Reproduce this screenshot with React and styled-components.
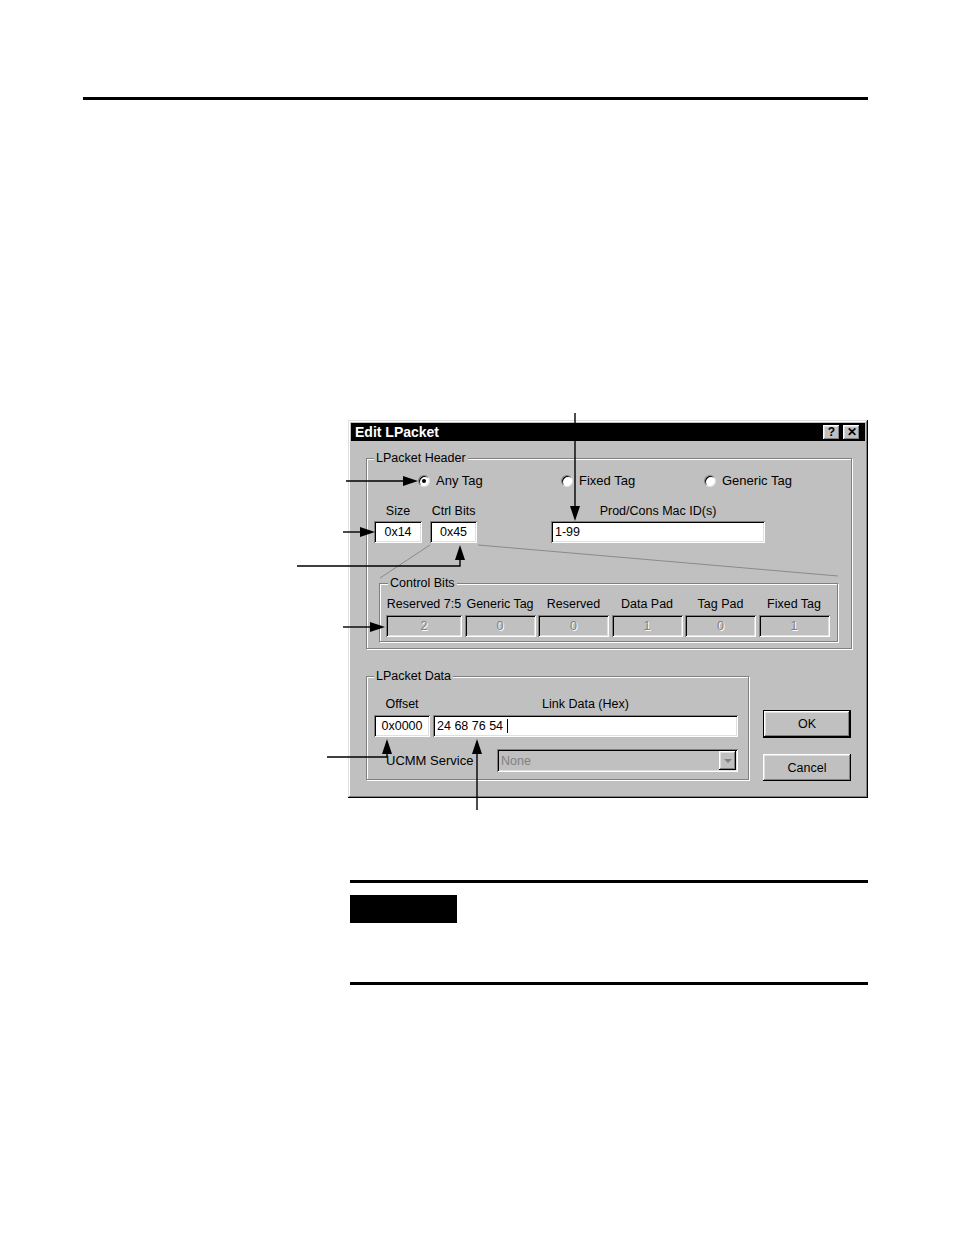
import React from 'react'
import styled, { createGlobalStyle } from 'styled-components'

const GlobalStyle = createGlobalStyle`
  html, body {
    margin: 0;
    padding: 0;
    background: #fff;
  }
  body {
    font-family: "Liberation Sans", Arial, sans-serif;
  }
`

const Page = styled.div`
  position: relative;
  width: 954px;
  height: 1235px;
  padding-top: 97px;
  box-sizing: border-box;
  background: #fff;
  overflow: hidden;
`

const Rule = styled.div`
  height: 3px;
  background: #000;
  margin-top: ${p => p.$top}px;
  margin-left: ${p => p.$left}px;
  width: ${p => p.$width}px;
`

const NoteTag = styled.div`
  margin-top: 12px;
  margin-left: 350px;
  width: 107px;
  height: 28px;
  background: #000;
`

/* ---------- dialog chrome ---------- */

const raised = `
  box-shadow: inset -1px -1px #000, inset 1px 1px #fff,
    inset -2px -2px #808080, inset 2px 2px #dfdfdf;
`

const sunken = `
  box-shadow: inset 1px 1px #808080, inset -1px -1px #fff,
    inset 2px 2px #000, inset -2px -2px #dfdfdf;
`

const Dialog = styled.div`
  margin-top: 320px;
  margin-left: 348px;
  width: 520px;
  box-sizing: border-box;
  padding: 3px;
  background: #c0c0c0;
  box-shadow: inset -1px -1px #000, inset 1px 1px #dfdfdf,
    inset -2px -2px #808080, inset 2px 2px #fff;
  font-size: 12.5px;
  color: #000;
`

const TitleBar = styled.div`
  height: 18px;
  background: #000;
  display: flex;
  align-items: center;
  justify-content: space-between;
  padding: 0 5px 0 4px;
`

const Title = styled.span`
  color: #fff;
  font-weight: bold;
  font-size: 14px;
`

const TitleButtons = styled.div`
  display: flex;
  gap: 3px;
`

const TitleButton = styled.div`
  width: 17px;
  height: 15px;
  background: #c0c0c0;
  ${raised}
  display: flex;
  align-items: center;
  justify-content: center;
  font-weight: bold;
  font-size: 12px;
  line-height: 15px;
`

const Body = styled.div`
  padding: 17px 13px 14px 15px;
  display: flex;
  flex-direction: column;
`

const GroupBox = styled.div`
  position: relative;
  border: 1px solid #808080;
  box-shadow: inset 1px 1px #fff, 1px 1px #fff;
  box-sizing: border-box;
`

const GroupTitle = styled.span`
  position: absolute;
  top: -8px;
  left: ${p => p.$left}px;
  padding: 0 2px;
  background: #c0c0c0;
  line-height: 14px;
  white-space: nowrap;
`

/* ---------- header group ---------- */

const RadioRow = styled.div`
  margin-top: 15px;
  height: 14px;
  padding-left: 51px;
  display: flex;
  align-items: center;
`

const RadioItem = styled.label`
  width: 143px;
  display: flex;
  align-items: center;
  gap: 6px;
  line-height: 14px;
  font-size: 13px;
`

const RadioDot = styled.span`
  position: relative;
  width: 12px;
  height: 12px;
  box-sizing: border-box;
  border-radius: 50%;
  background: #fff;
  border: 1px solid;
  border-color: #808080 #dfdfdf #dfdfdf #808080;
  box-shadow: inset 1px 1px #000;
  &::after {
    content: '';
    display: ${p => (p.$checked ? 'block' : 'none')};
    position: absolute;
    left: 3px;
    top: 3px;
    width: 4px;
    height: 4px;
    border-radius: 50%;
    background: #000;
  }
`

const FieldRow = styled.div`
  margin-top: 16px;
  padding-left: 7px;
  display: flex;
`

const FieldCol = styled.div`
  width: ${p => p.$w}px;
  margin-left: ${p => p.$ml || 0}px;
  display: flex;
  flex-direction: column;
  align-items: center;
`

const FieldLabel = styled.span`
  line-height: 14px;
  margin-bottom: ${p => p.$gap ?? 3}px;
  white-space: nowrap;
`

const TextBox = styled.div`
  width: 100%;
  height: 22px;
  box-sizing: border-box;
  padding: 0 4px;
  background: #fff;
  ${sunken}
  display: flex;
  align-items: center;
  justify-content: ${p => (p.$center ? 'center' : 'flex-start')};
  white-space: pre;
  line-height: 22px;
`

const Caret = styled.span`
  display: inline-block;
  width: 1px;
  height: 14px;
  background: #000;
`

const ControlBits = styled(GroupBox)`
  margin: 40px 13px 6px 12px;
  padding: 13px 8px 4px 6px;
`

const BitsGrid = styled.div`
  display: grid;
  grid-template-columns: 76px repeat(5, 71px);
  column-gap: 2.5px;
  row-gap: 4px;
`

const BitLabel = styled.span`
  text-align: center;
  line-height: 14px;
  white-space: nowrap;
`

const BitCell = styled.div`
  height: 22px;
  background: #c0c0c0;
  ${sunken}
  display: flex;
  align-items: center;
  justify-content: center;
  color: #808080;
  text-shadow: 1px 1px #fff;
`

/* ---------- data group + buttons ---------- */

const BottomRow = styled.div`
  margin-top: 27px;
  display: flex;
  align-items: flex-start;
`

const DataGroup = styled(GroupBox)`
  width: 383px;
  padding-bottom: 7px;
`

const DataRow = styled.div`
  margin-top: ${p => p.$top}px;
  padding-left: 7px;
  display: flex;
`

const ServiceRow = styled.div`
  margin-top: 12px;
  padding-left: 19px;
  display: flex;
  align-items: center;
`

const ServiceLabel = styled.span`
  width: 111px;
  line-height: 14px;
  font-size: 13px;
`

const ComboBox = styled.div`
  width: 241px;
  height: 23px;
  box-sizing: border-box;
  padding: 2px 2px 2px 4px;
  background: #c0c0c0;
  ${sunken}
  display: flex;
  align-items: center;
  justify-content: space-between;
  color: #808080;
`

const ComboButton = styled.div`
  width: 17px;
  height: 19px;
  background: #c0c0c0;
  ${raised}
  display: flex;
  align-items: center;
  justify-content: center;
  &::after {
    content: '';
    border-left: 4px solid transparent;
    border-right: 4px solid transparent;
    border-top: 4px solid #808080;
    margin-top: 1px;
  }
`

const ButtonCol = styled.div`
  margin-left: 14px;
  padding-top: 34px;
  width: 88px;
  display: flex;
  flex-direction: column;
  gap: 16px;
`

const PushButton = styled.div`
  height: ${p => (p.$default ? 28 : 27)}px;
  box-sizing: border-box;
  background: #c0c0c0;
  border: ${p => (p.$default ? '1px solid #000' : 'none')};
  ${raised}
  display: flex;
  align-items: center;
  justify-content: center;
  line-height: 14px;
`

/* ---------- callout arrows drawn over the figure ---------- */

const Overlay = styled.svg`
  position: absolute;
  left: 0;
  top: 0;
  pointer-events: none;
`

const head = (x, y, dir) => {
  const L = 15
  const W = 5
  if (dir === 'right') return `${x},${y} ${x - L},${y - W} ${x - L},${y + W}`
  if (dir === 'down') return `${x},${y} ${x - W},${y - L} ${x + W},${y - L}`
  return `${x},${y} ${x - W},${y + L} ${x + W},${y + L}`
}

const callouts = [
  { d: 'M575 413 V508', tip: [575, 521, 'down'] },
  { d: 'M346 481 H406', tip: [418, 481, 'right'] },
  { d: 'M343 532 H362', tip: [375, 532, 'right'] },
  { d: 'M297 566 H460 V558', tip: [460, 545, 'up'] },
  { d: 'M343 627 H372', tip: [385, 627, 'right'] },
  { d: 'M327 757 H387 V752', tip: [387, 739, 'up'] },
  { d: 'M477 810 V752', tip: [477, 739, 'up'] },
]

const bits = [
  ['Reserved 7:5', '2'],
  ['Generic Tag', '0'],
  ['Reserved', '0'],
  ['Data Pad', '1'],
  ['Tag Pad', '0'],
  ['Fixed Tag', '1'],
]

const radios = [
  ['Any Tag', true],
  ['Fixed Tag', false],
  ['Generic Tag', false],
]

export default function App() {
  return (
    <Page>
      <GlobalStyle />
      <Rule $top={0} $left={83} $width={785} />

      <Dialog>
        <TitleBar>
          <Title>Edit LPacket</Title>
          <TitleButtons>
            <TitleButton>?</TitleButton>
            <TitleButton>✕</TitleButton>
          </TitleButtons>
        </TitleBar>

        <Body>
          <GroupBox>
            <GroupTitle $left={7}>LPacket Header</GroupTitle>
            <RadioRow>
              {radios.map(([label, checked]) => (
                <RadioItem key={label}>
                  <RadioDot $checked={checked} />
                  {label}
                </RadioItem>
              ))}
            </RadioRow>

            <FieldRow>
              <FieldCol $w={48}>
                <FieldLabel>Size</FieldLabel>
                <TextBox $center>0x14</TextBox>
              </FieldCol>
              <FieldCol $w={47} $ml={8}>
                <FieldLabel>Ctrl Bits</FieldLabel>
                <TextBox $center>0x45</TextBox>
              </FieldCol>
              <FieldCol $w={214} $ml={74}>
                <FieldLabel>Prod/Cons Mac ID(s)</FieldLabel>
                <TextBox>1-99</TextBox>
              </FieldCol>
            </FieldRow>

            <ControlBits>
              <GroupTitle $left={8}>Control Bits</GroupTitle>
              <BitsGrid>
                {bits.map(([label]) => (
                  <BitLabel key={label}>{label}</BitLabel>
                ))}
                {bits.map(([label, value]) => (
                  <BitCell key={label + value}>{value}</BitCell>
                ))}
              </BitsGrid>
            </ControlBits>
          </GroupBox>

          <BottomRow>
            <DataGroup>
              <GroupTitle $left={7}>LPacket Data</GroupTitle>
              <DataRow $top={20}>
                <FieldCol $w={56}>
                  <FieldLabel $gap={4}>Offset</FieldLabel>
                  <TextBox $center>0x0000</TextBox>
                </FieldCol>
                <FieldCol $w={305} $ml={3}>
                  <FieldLabel $gap={4}>Link Data (Hex)</FieldLabel>
                  <TextBox>
                    {'24 68 76 54 '}
                    <Caret />
                  </TextBox>
                </FieldCol>
              </DataRow>
              <ServiceRow>
                <ServiceLabel>UCMM Service</ServiceLabel>
                <ComboBox>
                  None
                  <ComboButton />
                </ComboBox>
              </ServiceRow>
            </DataGroup>

            <ButtonCol>
              <PushButton $default>OK</PushButton>
              <PushButton>Cancel</PushButton>
            </ButtonCol>
          </BottomRow>
        </Body>
      </Dialog>

      <Rule $top={82} $left={350} $width={518} />
      <NoteTag />
      <Rule $top={59} $left={350} $width={518} />

      <Overlay width="954" height="1235" viewBox="0 0 954 1235">
        <g stroke="#8a8a8a" strokeWidth="1" fill="none">
          <path d="M430 545 L380 578" />
          <path d="M478 545 L838 576" />
        </g>
        {callouts.map(c => (
          <g key={c.d}>
            <path d={c.d} stroke="#000" strokeWidth="1.4" fill="none" />
            <polygon points={head(...c.tip)} fill="#000" />
          </g>
        ))}
      </Overlay>
    </Page>
  )
}
